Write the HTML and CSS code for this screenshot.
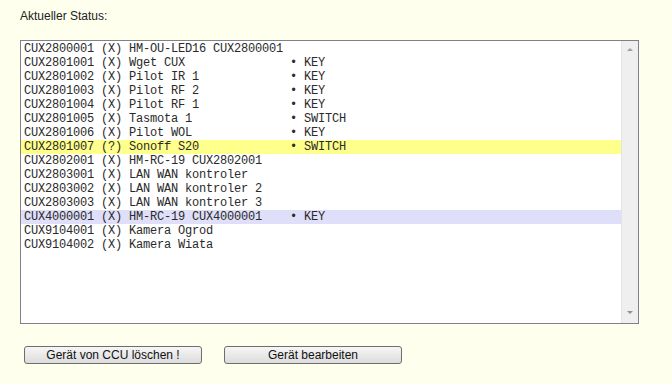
FILE: index.html
```html
<!DOCTYPE html>
<html lang="de">
<head>
    <meta charset="UTF-8">
    <title>Gerät Status</title>
    <link rel="stylesheet" href="styles.css">
</head>
<body>
    <div class="page">
        <div class="label">Aktueller Status:</div>

        <!-- Liste der Geräte -->
        <div class="listbox">
            <div class="list">
                <div class="row">CUX2800001 (X) HM-OU-LED16 CUX2800001</div>
                <div class="row">CUX2801001 (X) Wget CUX               • KEY</div>
                <div class="row">CUX2801002 (X) Pilot IR 1             • KEY</div>
                <div class="row">CUX2801003 (X) Pilot RF 2             • KEY</div>
                <div class="row">CUX2801004 (X) Pilot RF 1             • KEY</div>
                <div class="row">CUX2801005 (X) Tasmota 1              • SWITCH</div>
                <div class="row">CUX2801006 (X) Pilot WOL              • KEY</div>
                <div class="row row-warn">CUX2801007 (?) Sonoff S20             • SWITCH</div>
                <div class="row">CUX2802001 (X) HM-RC-19 CUX2802001</div>
                <div class="row">CUX2803001 (X) LAN WAN kontroler</div>
                <div class="row">CUX2803002 (X) LAN WAN kontroler 2</div>
                <div class="row">CUX2803003 (X) LAN WAN kontroler 3</div>
                <div class="row row-selected">CUX4000001 (X) HM-RC-19 CUX4000001    • KEY</div>
                <div class="row">CUX9104001 (X) Kamera Ogrod</div>
                <div class="row">CUX9104002 (X) Kamera Wiata</div>
            </div>
            <div class="scrollbar">
                <span class="arrow arrow-up"></span>
                <span class="arrow arrow-down"></span>
            </div>
        </div>

        <div class="buttons">
            <button class="btn">Gerät von CCU löschen !</button>
            <button class="btn">Gerät bearbeiten</button>
        </div>
    </div>
</body>
</html>
```

FILE: styles.css
```css
body {
    margin: 0;
    padding: 0;
    background-color: #ffffee;
    font-family: "Liberation Sans", Arial, sans-serif;
    font-size: 12px;
    color: #222;
}

.page {
    padding: 9px 0 0 20px;
}

.label {
    line-height: 14px;
    height: 14px;
    margin-bottom: 17px;
}

.listbox {
    display: flex;
    width: 617px;
    height: 282px;
    border: 1px solid #80808c;
    background: #fff;
}

.list {
    flex: 1;
    padding-top: 1px;
}

.row {
    height: 14px;
    line-height: 14px;
    padding-left: 3px;
    font-family: "Liberation Mono", "Courier New", monospace;
    font-size: 12px;
    letter-spacing: -0.2px;
    white-space: pre;
    color: #2a2a2a;
}

.row-warn {
    background: #ffff8c;
}

.row-selected {
    background: #dfdff9;
}

.scrollbar {
    width: 16px;
    background: #efefef;
    border-left: 1px solid #e4e4e4;
    display: flex;
    flex-direction: column;
    justify-content: space-between;
    align-items: center;
    padding: 7px 0;
}

.arrow {
    width: 0;
    height: 0;
    border-left: 3px solid transparent;
    border-right: 3px solid transparent;
}

.arrow-up {
    border-bottom: 3px solid #a0a0a0;
}

.arrow-down {
    border-top: 3px solid #909090;
    margin-bottom: 2px;
}

.buttons {
    display: flex;
    gap: 22px;
    margin-top: 22px;
    padding-left: 4px;
}

.btn {
    width: 178px;
    height: 18px;
    padding: 0;
    border: 1px solid #6e6e6e;
    border-radius: 3px;
    background: linear-gradient(#f6f6f6, #dcdcdc);
    font-family: "Liberation Sans", Arial, sans-serif;
    font-size: 12px;
    color: #111;
    line-height: 16px;
}
```
